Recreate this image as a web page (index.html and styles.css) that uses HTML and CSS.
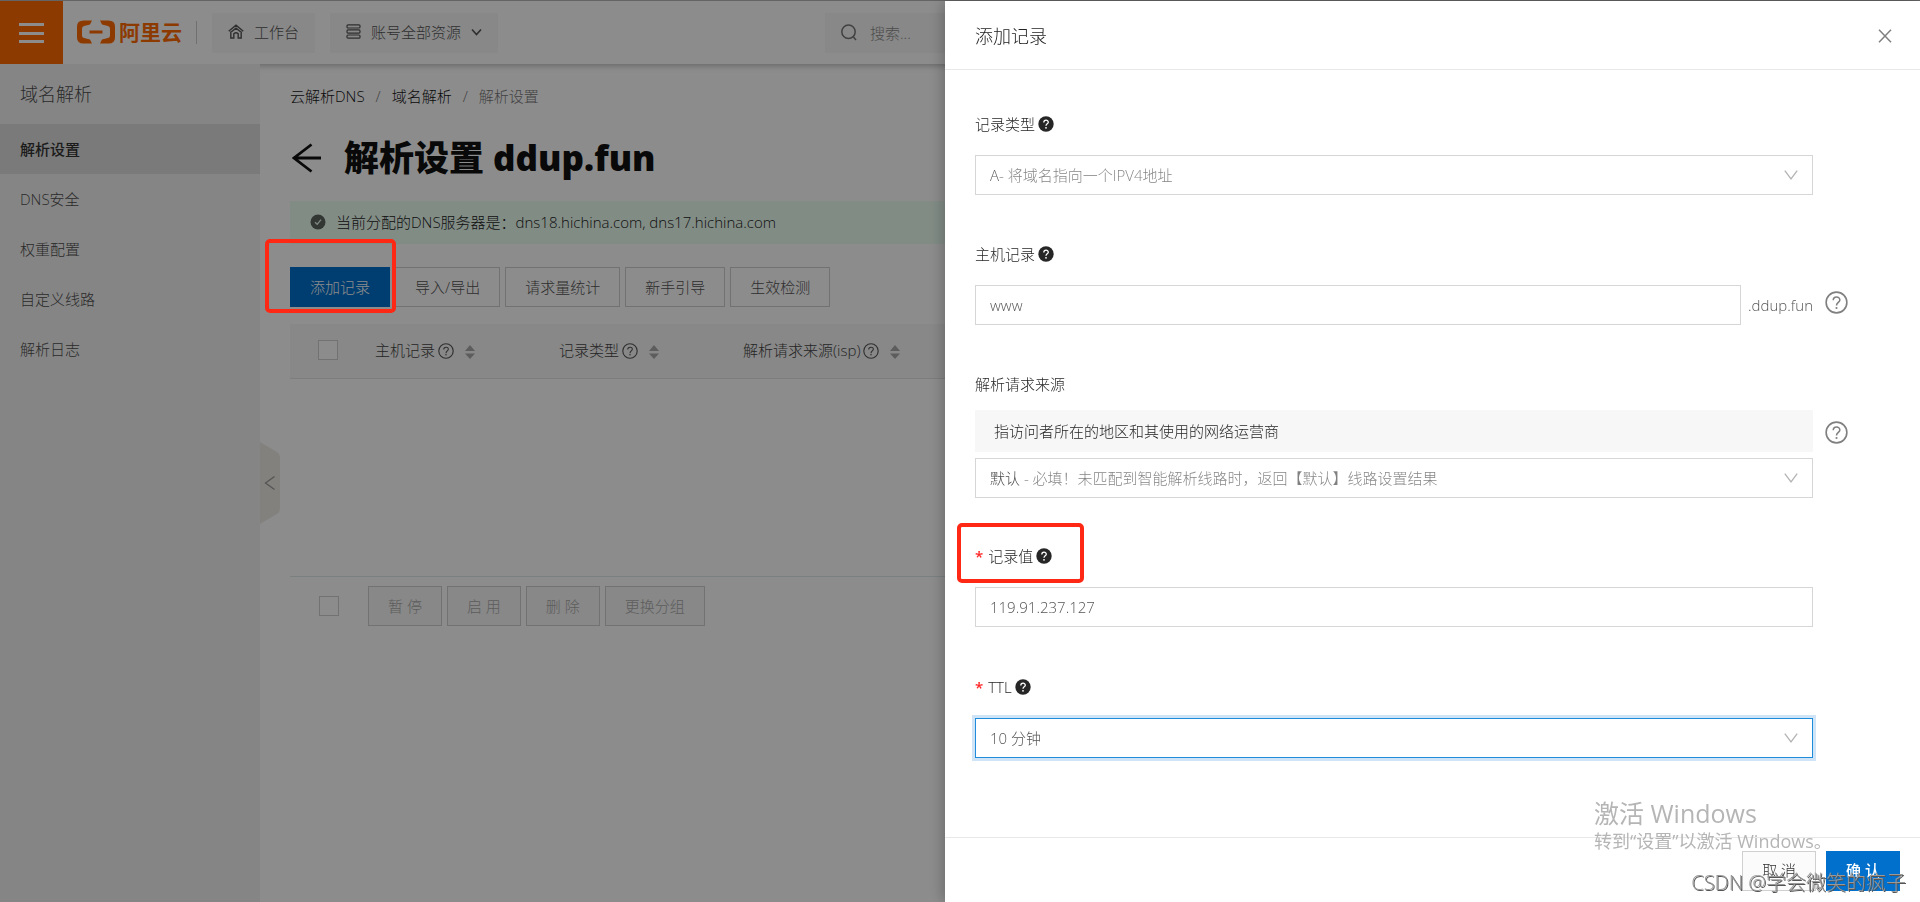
FILE: index.html
```html
<!DOCTYPE html>
<html lang="zh-CN">
<head>
<meta charset="utf-8">
<title>解析设置 ddup.fun</title>
<link rel="stylesheet" href="styles.css">
</head>
<body>
<svg class="defs" aria-hidden="true">
  <symbol id="help-solid" viewBox="0 0 16 16"><circle cx="8" cy="8" r="7.700" fill="#262626"/><path d="M5.800 6.400C5.800 3.500 10.300 3.500 10.300 6.200C10.300 7.900 8 7.800 8 9.700" fill="none" stroke="#fff" stroke-width="1.300"/><circle cx="8" cy="11.800" r=".9" fill="#fff"/></symbol>
  <symbol id="help-line" viewBox="0 0 24 24"><circle cx="12" cy="12" r="10.800" fill="none" stroke="currentColor" stroke-width="1.700"/><path d="M8.600 9.700C8.600 5.200 15.500 5.200 15.500 9.400C15.500 12 12 11.900 12 15.200" fill="none" stroke="currentColor" stroke-width="1.600"/><circle cx="12" cy="17.700" r="1.100" fill="currentColor"/></symbol>
  <symbol id="sorter" viewBox="0 0 10 16"><path d="M5 1L10 7H0zM5 15L0 9.500H10z" fill="currentColor"/></symbol>
  <symbol id="arrow" viewBox="0 0 14 10"><path d="M.8 .6L7 8.800L13.200 .6" fill="none" stroke="currentColor" stroke-width="1.300"/></symbol>
</svg>

<header class="topbar">
  <button class="menu" aria-label="菜单"><svg width="25" height="20" viewBox="0 0 25 20"><path d="M0 1.500H25M0 10.500H25M0 18.500H25" stroke="#fff" stroke-width="3"/></svg></button>
  <a class="logo" href="#"><svg width="38" height="24" viewBox="0 0 38 24" fill="none" stroke="#ff6a00"><path d="M15 .5H6.500Q0 .5 0 6.500V17.500Q0 23.500 6.500 23.500H15L13 19.500L7 18Q5 17.500 5 15.500V8.500Q5 6.500 7 6L13 4.500zM23 .5H31.500Q38 .5 38 6.500V17.500Q38 23.500 31.500 23.500H23L25 19.500L31 18Q33 17.500 33 15.500V8.500Q33 6.500 31 6L25 4.500z" fill="#ff6a00" stroke="none"/><path d="M12.500 12H25.500" stroke-width="3"/></svg><span>阿里云</span></a>
  <i class="divider"></i>
  <button class="pill"><svg width="16" height="15" viewBox="0 0 16 15" fill="none" stroke="currentColor" stroke-width="1.400"><path d="M.7 7.200L8 1.200L15.300 7.200M2.800 7.500V14H5.800V9.700Q8 7.600 10.200 9.700V14H13.200V7.500M2.500 8.500L8 4.200L13.500 8.500"/></svg>工作台</button>
  <button class="pill"><svg width="15" height="15" viewBox="0 0 15 15" fill="none" stroke="currentColor" stroke-width="1.200"><rect x="1" y=".8" width="13" height="3.200" rx="1"/><rect x="1" y="5.900" width="13" height="3.200" rx="1"/><rect x="1" y="11" width="13" height="3.200" rx="1"/></svg>账号全部资源<svg width="11" height="8" viewBox="0 0 11 8"><path d="M1 1.500L5.500 6.500L10 1.500" fill="none" stroke="currentColor" stroke-width="1.600"/></svg></button>
  <label class="search"><svg width="16" height="17" viewBox="0 0 16 17" fill="none" stroke="currentColor" stroke-width="1.500"><circle cx="7.500" cy="7.700" r="6.700"/><path d="M12 12.500L15 16"/></svg><input type="search" placeholder="搜索..." aria-label="搜索"></label>
</header>

<div class="layout">
  <nav class="sidebar">
    <h2>域名解析</h2>
    <a class="active" href="#">解析设置</a>
    <a href="#">DNS安全</a>
    <a href="#">权重配置</a>
    <a href="#">自定义线路</a>
    <a href="#">解析日志</a>
    <button class="collapse" aria-label="收起"><svg width="20" height="82" viewBox="0 0 20 82"><path d="M0 0L17 10Q20 12 20 15V67Q20 70 17 72L0 82z" fill="#edece6"/><path d="M14.500 34.500L5.500 41L14.500 47.500" fill="none" stroke="#999" stroke-width="1.300"/></svg></button>
  </nav>
  <main class="main">
    <div class="crumbs"><a href="#">云解析DNS</a><i>/</i><a href="#">域名解析</a><i>/</i><span>解析设置</span></div>
    <h1><svg width="30" height="30" viewBox="0 0 30 30" fill="none" stroke="#111" stroke-width="2.800"><path d="M19.500 1.500L2 15L19.500 28.500M2 15H29"/></svg>解析设置 ddup.fun</h1>
    <p class="alert"><svg width="16" height="16" viewBox="0 0 16 16"><circle cx="8" cy="8" r="7.500" fill="#5c645f"/><path d="M5 8.200L7.200 10.300L11 5.600" fill="none" stroke="#e6f7ec" stroke-width="1.300"/></svg>当前分配的DNS服务器是：dns18.hichina.com, dns17.hichina.com</p>
    <div class="actions">
      <span class="marked"><button class="btn primary">添加记录</button><i class="mark mark-add"></i></span>
      <button class="btn">导入/导出</button>
      <button class="btn">请求量统计</button>
      <button class="btn">新手引导</button>
      <button class="btn">生效检测</button>
    </div>
    <table class="records">
      <thead><tr>
        <th class="check"><input type="checkbox" aria-label="全选"></th>
        <th>主机记录<svg class="q"><use href="#help-line"/></svg><svg class="sort"><use href="#sorter"/></svg></th>
        <th>记录类型<svg class="q"><use href="#help-line"/></svg><svg class="sort"><use href="#sorter"/></svg></th>
        <th>解析请求来源(isp)<svg class="q"><use href="#help-line"/></svg><svg class="sort"><use href="#sorter"/></svg></th>
        <th class="rest"></th>
      </tr></thead>
    </table>
    <div class="batch">
      <input type="checkbox" aria-label="选择全部记录">
      <div class="batch-buttons">
        <button class="btn" disabled>暂 停</button>
        <button class="btn" disabled>启 用</button>
        <button class="btn" disabled>删 除</button>
        <button class="btn" disabled>更换分组</button>
      </div>
    </div>
  </main>
</div>

<div class="mask"></div>

<aside class="drawer" role="dialog" aria-labelledby="drawer-title">
  <header class="drawer-head">
    <h2 id="drawer-title">添加记录</h2>
    <button class="close" aria-label="关闭"><svg width="14" height="14" viewBox="0 0 14 14"><path d="M1 .7L13 13.300M13 .7L1 13.300" stroke="#808080" stroke-width="1.500"/></svg></button>
  </header>
  <form class="form">
    <div class="field">
      <label for="type">记录类型<svg class="hint"><use href="#help-solid"/></svg></label>
      <div class="control select"><select id="type" class="two-tone tone-a"><option>A- 将域名指向一个IPV4地址</option></select><svg class="arrow"><use href="#arrow"/></svg></div>
    </div>
    <div class="field">
      <label for="host">主机记录<svg class="hint"><use href="#help-solid"/></svg></label>
      <div class="row">
        <div class="control suffix"><input id="host" type="text" value="www"><span>.ddup.fun</span></div>
        <svg class="side"><use href="#help-line"/></svg>
      </div>
    </div>
    <div class="field">
      <label for="line">解析请求来源</label>
      <div class="row line-row">
        <div class="control stack">
          <p class="note">指访问者所在的地区和其使用的网络运营商</p>
          <div class="select"><select id="line" class="two-tone tone-line"><option>默认 - 必填！未匹配到智能解析线路时，返回【默认】线路设置结果</option></select><svg class="arrow"><use href="#arrow"/></svg></div>
        </div>
        <svg class="side"><use href="#help-line"/></svg>
      </div>
    </div>
    <div class="field">
      <label for="value"><b>*</b>记录值<svg class="hint"><use href="#help-solid"/></svg></label><i class="mark mark-value"></i>
      <div class="control"><input id="value" type="text" value="119.91.237.127"></div>
    </div>
    <div class="field">
      <label for="ttl"><b>*</b>TTL<svg class="hint"><use href="#help-solid"/></svg></label>
      <div class="control select focused"><select id="ttl"><option>10 分钟</option></select><svg class="arrow"><use href="#arrow"/></svg></div>
    </div>
  </form>
  <footer class="drawer-foot">
    <button class="btn cancel">取 消</button>
    <button class="btn primary strong">确 认</button>
  </footer>
</aside>

<div class="activate"><strong>激活 Windows</strong><span>转到“设置”以激活 Windows。</span></div>
<div class="credit">CSDN @学会微笑的疯子</div>
</body>
</html>
```
FILE: styles.css
```css
* { box-sizing: border-box; }
body {
  margin: 0;
  min-height: 100vh;
  display: flex;
  flex-direction: column;
  border-top: 1px solid #b8b6b6;
  background: #fff;
  color: #333;
  font: 300 15px/22px "Open Sans", "Noto Sans CJK SC", sans-serif;
}
button, input, select { font: inherit; color: inherit; margin: 0; }
button { cursor: pointer; }
a { color: inherit; text-decoration: none; }
i, b { font-style: normal; font-weight: inherit; }
h1, h2, p { margin: 0; }
svg { flex: none; }
.defs { position: absolute; width: 0; height: 0; }

.topbar {
  display: flex;
  align-items: center;
  height: 63px;
  position: relative;
  box-shadow: 0 2px 6px rgba(0, 0, 0, .25);
}
.menu {
  align-self: stretch;
  width: 63px;
  border: 0;
  padding: 0;
  display: grid;
  place-items: center;
  background: #ff6a00;
}
.logo {
  display: flex;
  align-items: center;
  gap: 4px;
  margin-left: 14px;
  padding-bottom: 2px;
  color: #ff6a00;
  font-size: 21px;
  font-weight: 700;
}
.divider { width: 1px; height: 23px; margin: 0 15px 0 14px; background: #ccc; }
.pill {
  display: flex;
  align-items: center;
  gap: 10px;
  height: 40px;
  padding: 0 16px 2px;
  margin-right: 15px;
  border: 0;
  border-radius: 2px;
  background: #f7f7f7;
  color: #555;
}
.search {
  display: flex;
  align-items: center;
  gap: 13px;
  width: 400px;
  height: 40px;
  padding: 0 16px;
  margin-left: 312px;
  background: #f7f7f7;
  color: #777;
}
.search input { flex: 1; min-width: 0; border: 0; padding: 0; background: none; }
.search input::placeholder { color: #8c8c8c; }

.layout { flex: 1; display: flex; }
.sidebar {
  position: relative;
  width: 260px;
  flex: none;
  background: #f3f3f3;
  color: #4d4d4d;
}
.sidebar h2 { padding: 0 20px; font-size: 18px; line-height: 60px; font-weight: 300; }
.sidebar a { display: block; padding: 0 20px; line-height: 50px; }
.sidebar a.active { background: #dfdfdf; font-weight: 500; color: #333; }
.collapse {
  position: absolute;
  left: 260px;
  top: 378px;
  border: 0;
  padding: 0;
  background: none;
  display: block;
}
.collapse svg { display: block; }

.main { flex: 1; min-width: 0; padding: 21px 30px 0; }
.crumbs { display: flex; gap: 11px; color: #111; }
.crumbs i, .crumbs span { color: #777; }
h1 {
  display: flex;
  align-items: center;
  gap: 22px;
  margin-top: 26px;
  padding-left: 2px;
  font-size: 35px;
  line-height: 50px;
  font-weight: 800;
  color: #111;
}
.alert {
  display: flex;
  align-items: center;
  gap: 10px;
  height: 43px;
  margin-top: 18px;
  padding: 0 20px 2px;
  background: #ecfff3;
  color: #222;
}
.actions { display: flex; gap: 5px; margin-top: 23px; }
.btn {
  height: 40px;
  padding: 0 19px;
  border: 1px solid #d0d0d0;
  background: #fff;
  color: #555;
  white-space: nowrap;
}
.btn.primary { border-color: #0070cc; background: #0070cc; color: #fff; }
.btn:disabled { background: #f7f7f7; color: #aaa; cursor: default; }
.marked { position: relative; }
.mark {
  position: absolute;
  border: 4px solid #ff2814;
  border-radius: 5px;
  pointer-events: none;
}
.mark-add { z-index: 5; left: -25px; right: -6px; top: -28px; bottom: -6px; }

.records {
  width: 100%;
  margin-top: 17px;
  border-collapse: collapse;
  table-layout: fixed;
}
.records th {
  width: 184px;
  height: 54px;
  padding: 0 0 2px 16px;
  border-bottom: 1px solid #e3e3e3;
  background: #f7f7f7;
  text-align: left;
  font-weight: 300;
  color: #444;
  white-space: nowrap;
}
.records .check { width: 69px; padding-left: 28px; }
.records .rest { width: auto; }
.records svg { vertical-align: middle; }
.q { width: 16px; height: 16px; margin: 0 11px 2px 3px; color: #555; }
.sort { width: 10px; height: 16px; color: #aaa; }
input[type="checkbox"] {
  appearance: none;
  display: block;
  width: 20px;
  height: 20px;
  border: 1px solid #d0d0d0;
  background: #fff;
}
.batch {
  display: flex;
  align-items: center;
  gap: 29px;
  margin-top: 197px;
  padding: 9px 29px;
  border-top: 1px solid #dfeaea;
}
.batch-buttons { display: flex; gap: 5px; }

.mask { position: fixed; z-index: 3; inset: 0; background: rgba(0, 0, 0, .45); }

.drawer {
  position: fixed;
  z-index: 6;
  top: 1px;
  right: 0;
  bottom: 0;
  width: 975px;
  display: flex;
  flex-direction: column;
  background: #fff;
  box-shadow: -2px 0 14px rgba(0, 0, 0, .25);
}
.drawer-head {
  display: flex;
  align-items: center;
  justify-content: space-between;
  height: 69px;
  padding: 2px 28px 0 30px;
  border-bottom: 1px solid #e8e8e8;
}
.drawer-head h2 { font-size: 18px; line-height: 26px; font-weight: 300; color: #222; }
.close { display: block; border: 0; padding: 0; background: none; line-height: 0; }
.form { flex: 1; padding: 40px 30px 0; }
.field { position: relative; display: flex; flex-direction: column; gap: 17px; margin-bottom: 45px; }
.field:nth-child(3) { margin-bottom: 44px; }
.field:nth-child(4) { margin-bottom: 46px; }
.field label { display: flex; align-items: center; height: 28px; color: #262626; }
.field label b { margin-right: 5px; color: #f22; font-weight: 600; }
.hint { width: 16px; height: 16px; margin-left: 3px; }
.control { width: 838px; max-width: 100%; }
.control input, .control select {
  display: block;
  width: 100%;
  height: 40px;
  padding: 0 14px;
  border: 1px solid #d6d6d6;
  border-radius: 0;
  outline: 0;
  background: #fff;
  color: #555;
}
.select { position: relative; background: #fff; }
.select select { appearance: none; }
.arrow {
  position: absolute;
  right: 15px;
  top: 15px;
  width: 14px;
  height: 10px;
  color: #b3b3b3;
  pointer-events: none;
}
.control select.two-tone {
  background-clip: text;
  -webkit-text-fill-color: transparent;
}
.control select.tone-a { background-image: linear-gradient(90deg, #555 24px, #808080 24px); }
.control select.tone-line { background-image: linear-gradient(90deg, #444 46px, #808080 46px); }
.row { display: flex; gap: 12px; }
.suffix { display: flex; align-items: center; gap: 7px; color: #555; }
.suffix input { flex: 1; min-width: 0; }
.side { width: 23px; height: 23px; margin-top: 6px; color: #808080; }
.line-row { margin-top: -5px; }
.line-row .side { margin-top: 11px; }
.stack { display: flex; flex-direction: column; gap: 6px; }
.note { height: 42px; padding: 0 19px; line-height: 42px; background: #f7f7f7; color: #262626; }
.mark-value { left: -18px; top: -19px; width: 127px; height: 60px; }
.focused select { border-color: #1f8bdb; box-shadow: 0 0 0 3px #cfe4f7; }
.drawer-foot {
  display: flex;
  justify-content: flex-end;
  gap: 10px;
  padding: 13px 20px 11px;
  border-top: 1px solid #e8e8e8;
}
.drawer-foot .btn { padding-bottom: 2px; }
.btn.cancel { background: #fbfbfb; color: #333; }
.btn.strong { font-weight: 500; }

.activate {
  position: fixed;
  z-index: 7;
  right: 93px;
  bottom: 49px;
  width: 233px;
  color: #b5b5b5;
  white-space: nowrap;
  pointer-events: none;
}
.activate strong, .activate span { display: block; font-weight: 400; }
.activate strong { font-size: 25px; line-height: 32px; }
.activate span { font-size: 18px; line-height: 24px; }
.credit {
  position: fixed;
  z-index: 7;
  right: 14px;
  bottom: 5px;
  font-size: 20px;
  line-height: 28px;
  color: #999;
  text-shadow: 1px 1px 0 #555;
  pointer-events: none;
}
```
